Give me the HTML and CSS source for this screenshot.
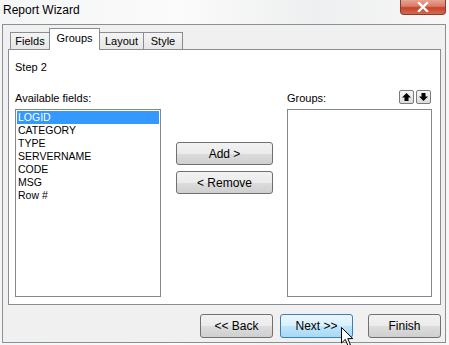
FILE: index.html
```html
<!DOCTYPE html>
<html lang="en">
<head>
  <meta charset="UTF-8" />
  <title>Report Wizard</title>
  <link rel="stylesheet" href="styles.css">
</head>
<body>
  <div class="window">
    <div class="titlebar">
      <span class="title">Report Wizard</span>
      <div class="close">
        <svg width="14" height="10" viewBox="0 0 14 10">
          <path d="M3 1 L11 9 M11 1 L3 9" stroke="#fff" stroke-width="2.4" stroke-linecap="square" />
        </svg>
      </div>
    </div>

    <div class="frame">
      <div class="tabs">
        <div class="tab tab-fields">Fields</div>
        <div class="tab tab-groups active">Groups</div>
        <div class="tab tab-layout">Layout</div>
        <div class="tab tab-style">Style</div>
      </div>

      <div class="panel">
        <div class="step">Step 2</div>

        <div class="columns">
          <div class="col col-left">
            <div class="col-head"><span>Available fields:</span></div>
            <ul class="listbox">
              <li class="selected">LOGID</li>
              <li>CATEGORY</li>
              <li>TYPE</li>
              <li>SERVERNAME</li>
              <li>CODE</li>
              <li>MSG</li>
              <li>Row #</li>
            </ul>
          </div>

          <div class="col-mid">
            <button class="btn">Add &gt;</button>
            <button class="btn">&lt; Remove</button>
          </div>

          <div class="col col-right">
            <div class="col-head">
              <span>Groups:</span>
              <div class="order">
                <div class="order-btn">
                  <svg width="13" height="12" viewBox="0 0 13 12">
                    <polygon points="6.5,2 11,6.5 8.5,6.5 8.5,10 4.5,10 4.5,6.5 2,6.5" fill="#000" />
                  </svg>
                </div>
                <div class="order-btn">
                  <svg width="13" height="12" viewBox="0 0 13 12">
                    <polygon points="6.5,10 11,5.5 8.5,5.5 8.5,2 4.5,2 4.5,5.5 2,5.5" fill="#000" />
                  </svg>
                </div>
              </div>
            </div>
            <ul class="listbox"></ul>
          </div>
        </div>
      </div>

      <div class="footer">
        <button class="btn btn-wide">&lt;&lt; Back</button>
        <button class="btn btn-wide hover btn-next">Next &gt;&gt;</button>
        <button class="btn btn-wide btn-finish">Finish</button>
      </div>
    </div>

    <svg class="cursor" width="14" height="21" viewBox="0 0 14 21">
      <path d="M0.5 0.5 L0.5 16 L4.3 12.4 L7 18.8 L9.4 17.8 L6.8 11.6 L11.8 11.6 Z" fill="#fff" stroke="#000" stroke-width="1" stroke-linejoin="miter" />
    </svg>
  </div>
</body>
</html>
```

FILE: styles.css
```css
* { box-sizing: border-box; }

body {
  margin: 0;
  background: #f5f6f7;
  font-family: "Liberation Sans", Arial, sans-serif;
  font-size: 11px;
  color: #000;
}

.window {
  position: relative;
  width: 449px;
  height: 345px;
  overflow: hidden;
  background: linear-gradient(90deg, #f4f5f6 0%, #fbfbfb 40%, #eeeff0 70%, #f7f7f7 100%);
}

.titlebar {
  height: 24px;
  display: flex;
  justify-content: space-between;
  align-items: flex-start;
}

.title {
  font-size: 12px;
  line-height: 16px;
  padding: 2px 0 0 3px;
}

.close {
  width: 46px;
  height: 15px;
  margin-right: 3px;
  border: 1px solid #8a3b2c;
  border-top: none;
  border-radius: 0 0 4px 4px;
  background: linear-gradient(#e9a493 0%, #d97a64 45%, #c6432c 55%, #d36a4f 100%);
  display: flex;
  justify-content: center;
  align-items: center;
}

.frame {
  margin-left: 2px;
  width: 444px;
  height: 319px;
  border: 1px solid #8e8f90;
  background: #f0f0f0;
  padding: 3px 4px 0 5px;
}

/* tabs */
.tabs {
  height: 21px;
  display: flex;
  align-items: flex-end;
  padding-left: 2px;
}

.tab {
  height: 17px;
  border: 1px solid #898c95;
  border-bottom: none;
  background: linear-gradient(#f4f4f4, #e6e6e6);
  text-align: center;
  line-height: 13px;
  padding-top: 2px;
}

.tab + .tab { margin-left: -1px; }

.tab-fields { width: 40px; }
.tab-groups { width: 51px; }
.tab-layout { width: 45px; }
.tab-style { width: 40px; }

.tab.active {
  height: 22px;
  margin-bottom: -1px;
  background: #fff;
  position: relative;
  z-index: 1;
  padding-top: 3px;
}

.panel {
  height: 256px;
  border: 1px solid #898c95;
  background: #fff;
  padding: 11px 0 0 6px;
}

.step {
  line-height: 13px;
}

.columns {
  display: flex;
  margin-top: 16px;
}

.col {
  display: flex;
  flex-direction: column;
}

.col-left { width: 146px; }
.col-right { width: 145px; margin-left: 14px; }

.col-head {
  height: 15px;
  margin-bottom: 4px;
  display: flex;
  justify-content: space-between;
  align-items: flex-end;
  line-height: 13px;
}

.order {
  display: flex;
  gap: 2px;
  align-self: flex-start;
  margin-right: 1px;
}

.order-btn {
  width: 15px;
  height: 14px;
  border: 1px solid #7a7a7a;
  border-radius: 2px;
  background: linear-gradient(#f6f6f6, #dcdcdc);
  display: flex;
  justify-content: center;
  align-items: center;
}

.listbox {
  height: 188px;
  margin: 0;
  padding: 1px;
  list-style: none;
  border: 1px solid #828790;
  background: #fff;
}

.listbox li {
  height: 13px;
  line-height: 13px;
  padding-left: 1px;
  font-size: 10.5px;
}

.listbox li.selected {
  background: #3399ff;
  color: #fff;
}

.col-mid {
  width: 97px;
  margin-left: 15px;
  padding-top: 52px;
  display: flex;
  flex-direction: column;
  gap: 6px;
}

/* buttons */
.btn {
  height: 23px;
  padding: 0;
  border: 1px solid #707070;
  border-radius: 3px;
  background: linear-gradient(#f2f2f2 0%, #ebebeb 50%, #dddddd 50%, #cfcfcf 100%);
  font-family: "Liberation Sans", Arial, sans-serif;
  font-size: 12px;
  color: #000;
}

.btn.hover {
  border-color: #3c7fb1;
  background: linear-gradient(#eaf6fd 0%, #d9f0fc 50%, #bee6fd 50%, #a7d9f5 100%);
}

.footer {
  display: flex;
  justify-content: flex-end;
  margin-top: 9px;
}

.btn-wide {
  width: 73px;
  height: 24px;
}

.btn-next { margin-left: 7px; }
.btn-finish { margin-left: 15px; }

.cursor {
  position: absolute;
  left: 341px;
  top: 327px;
}
```
